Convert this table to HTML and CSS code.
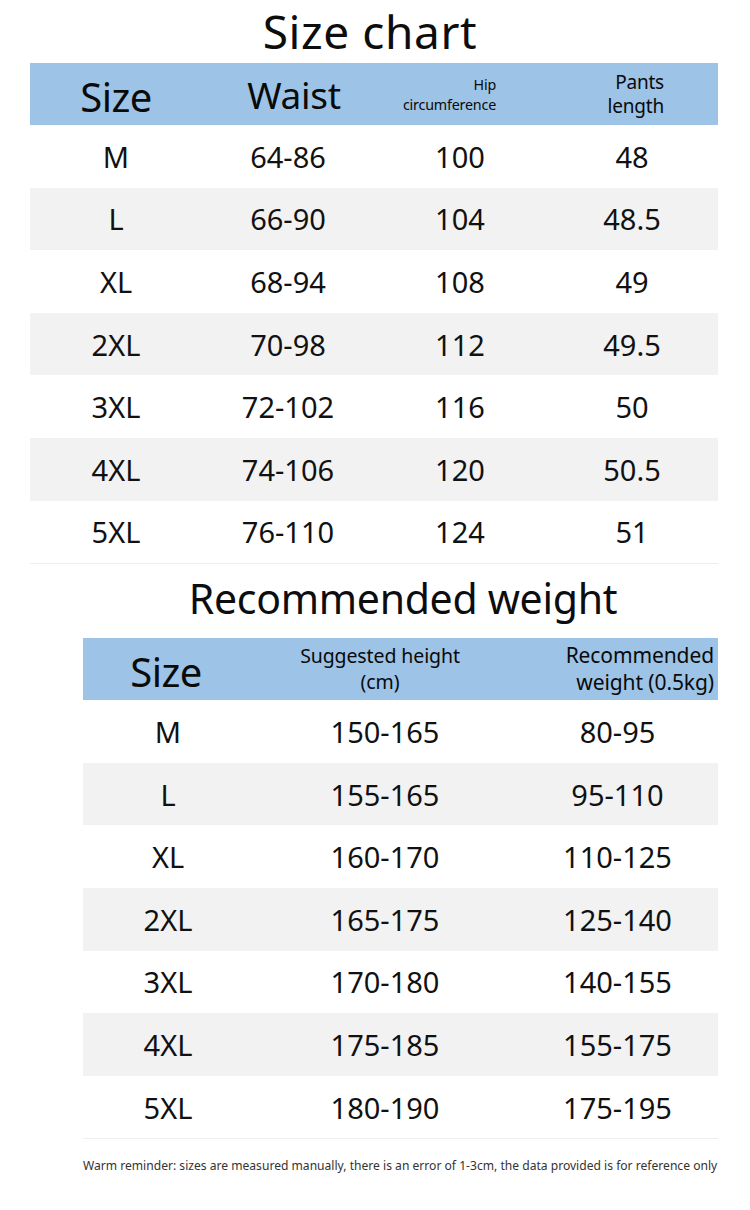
FILE: index.html
```html
<!DOCTYPE html>
<html>
<head>
<meta charset="utf-8">
<link rel="stylesheet" href="styles.css">
</head>
<body>
<div class="page">
  <h1 class="title t1">Size chart</h1>
  <div class="chart chart1">
    <div class="row head">
      <div class="cell hsize">Size</div>
      <div class="cell hwaist">Waist</div>
      <div class="cell hhip"><span>Hip<br>circumference</span></div>
      <div class="cell hpants"><span>Pants<br>length</span></div>
    </div>
    <div class="row"><div class="cell">M</div><div class="cell">64-86</div><div class="cell">100</div><div class="cell">48</div></div>
    <div class="row alt"><div class="cell">L</div><div class="cell">66-90</div><div class="cell">104</div><div class="cell">48.5</div></div>
    <div class="row"><div class="cell">XL</div><div class="cell">68-94</div><div class="cell">108</div><div class="cell">49</div></div>
    <div class="row alt"><div class="cell">2XL</div><div class="cell">70-98</div><div class="cell">112</div><div class="cell">49.5</div></div>
    <div class="row"><div class="cell">3XL</div><div class="cell">72-102</div><div class="cell">116</div><div class="cell">50</div></div>
    <div class="row alt"><div class="cell">4XL</div><div class="cell">74-106</div><div class="cell">120</div><div class="cell">50.5</div></div>
    <div class="row last"><div class="cell">5XL</div><div class="cell">76-110</div><div class="cell">124</div><div class="cell">51</div></div>
  </div>

  <h2 class="title t2">Recommended weight</h2>
  <div class="chart chart2">
    <div class="row head">
      <div class="cell hsize">Size</div>
      <div class="cell hheight">Suggested height<br>(cm)</div>
      <div class="cell hweight"><span>Recommended<br>weight (0.5kg)</span></div>
    </div>
    <div class="row"><div class="cell">M</div><div class="cell">150-165</div><div class="cell">80-95</div></div>
    <div class="row alt"><div class="cell">L</div><div class="cell">155-165</div><div class="cell">95-110</div></div>
    <div class="row"><div class="cell">XL</div><div class="cell">160-170</div><div class="cell">110-125</div></div>
    <div class="row alt"><div class="cell">2XL</div><div class="cell">165-175</div><div class="cell">125-140</div></div>
    <div class="row"><div class="cell">3XL</div><div class="cell">170-180</div><div class="cell">140-155</div></div>
    <div class="row alt"><div class="cell">4XL</div><div class="cell">175-185</div><div class="cell">155-175</div></div>
    <div class="row last"><div class="cell">5XL</div><div class="cell">180-190</div><div class="cell">175-195</div></div>
  </div>
  <p class="note">Warm reminder: sizes are measured manually, there is an error of 1-3cm, the data provided is for reference only</p>
</div>
</body>
</html>
```
FILE: styles.css
```css
html, body {
  margin: 0;
  padding: 0;
  background: #ffffff;
}
body {
  font-family: "Noto Sans", "Open Sans", sans-serif;
  color: #111111;
}
.page {
  width: 750px;
  height: 1210px;
  display: flex;
  flex-direction: column;
}
.title {
  margin: 0;
  font-weight: 400;
  text-align: center;
  color: #0d0d0d;
}
.t1 {
  font-size: 46px;
  line-height: 63px;
  height: 63px;
  letter-spacing: 0.6px;
  padding-right: 10px;
}
.t2 {
  font-size: 41px;
  line-height: 50px;
  padding-top: 9px;
  height: 74px;
  box-sizing: border-box;
  padding-left: 56px;
  letter-spacing: -0.3px;
}
.chart {
  display: flex;
  flex-direction: column;
  border-bottom: 1px solid #eeeeee;
}
.chart1 {
  margin-left: 30px;
  width: 688px;
}
.chart2 {
  margin-left: 83px;
  width: 635px;
}
.row {
  display: grid;
  height: 62.6px;
  align-items: center;
  background: #ffffff;
}
.chart1 .row {
  grid-template-columns: repeat(4, 1fr);
}
.chart2 .row {
  grid-template-columns: 170px 264px 1fr;
}
.row.alt {
  background: #f2f2f2;
}
.row.head {
  background: #9dc3e6;
  height: 62px;
}
.cell {
  text-align: center;
  font-size: 29px;
}
.head .cell {
  color: #0a0a0a;
}
.head .hsize {
  font-size: 40px;
  padding-top: 4px;
  letter-spacing: -0.5px;
}
.chart1 .hwaist {
  font-size: 37px;
  padding-left: 12px;
  letter-spacing: -0.3px;
}
.chart1 .hhip {
  font-size: 14.3px;
  line-height: 20px;
  text-align: right;
  padding-right: 50px;
  padding-top: 2px;
  letter-spacing: -0.2px;
}
.chart1 .hpants {
  font-size: 19px;
  line-height: 24px;
  text-align: right;
  padding-right: 54px;
  letter-spacing: -0.2px;
}
.chart2 .hsize {
  padding-right: 4px;
}
.chart2 .hheight {
  font-size: 19.5px;
  line-height: 26px;
  padding-right: 10px;
  letter-spacing: -0.1px;
}
.chart2 .hweight {
  font-size: 21px;
  line-height: 27px;
  text-align: right;
  padding-right: 4px;
  letter-spacing: -0.1px;
}
.note {
  margin: 18px 0 0 83px;
  width: 640px;
  font-size: 12.1px;
  color: #333333;
  white-space: nowrap;
}
```
